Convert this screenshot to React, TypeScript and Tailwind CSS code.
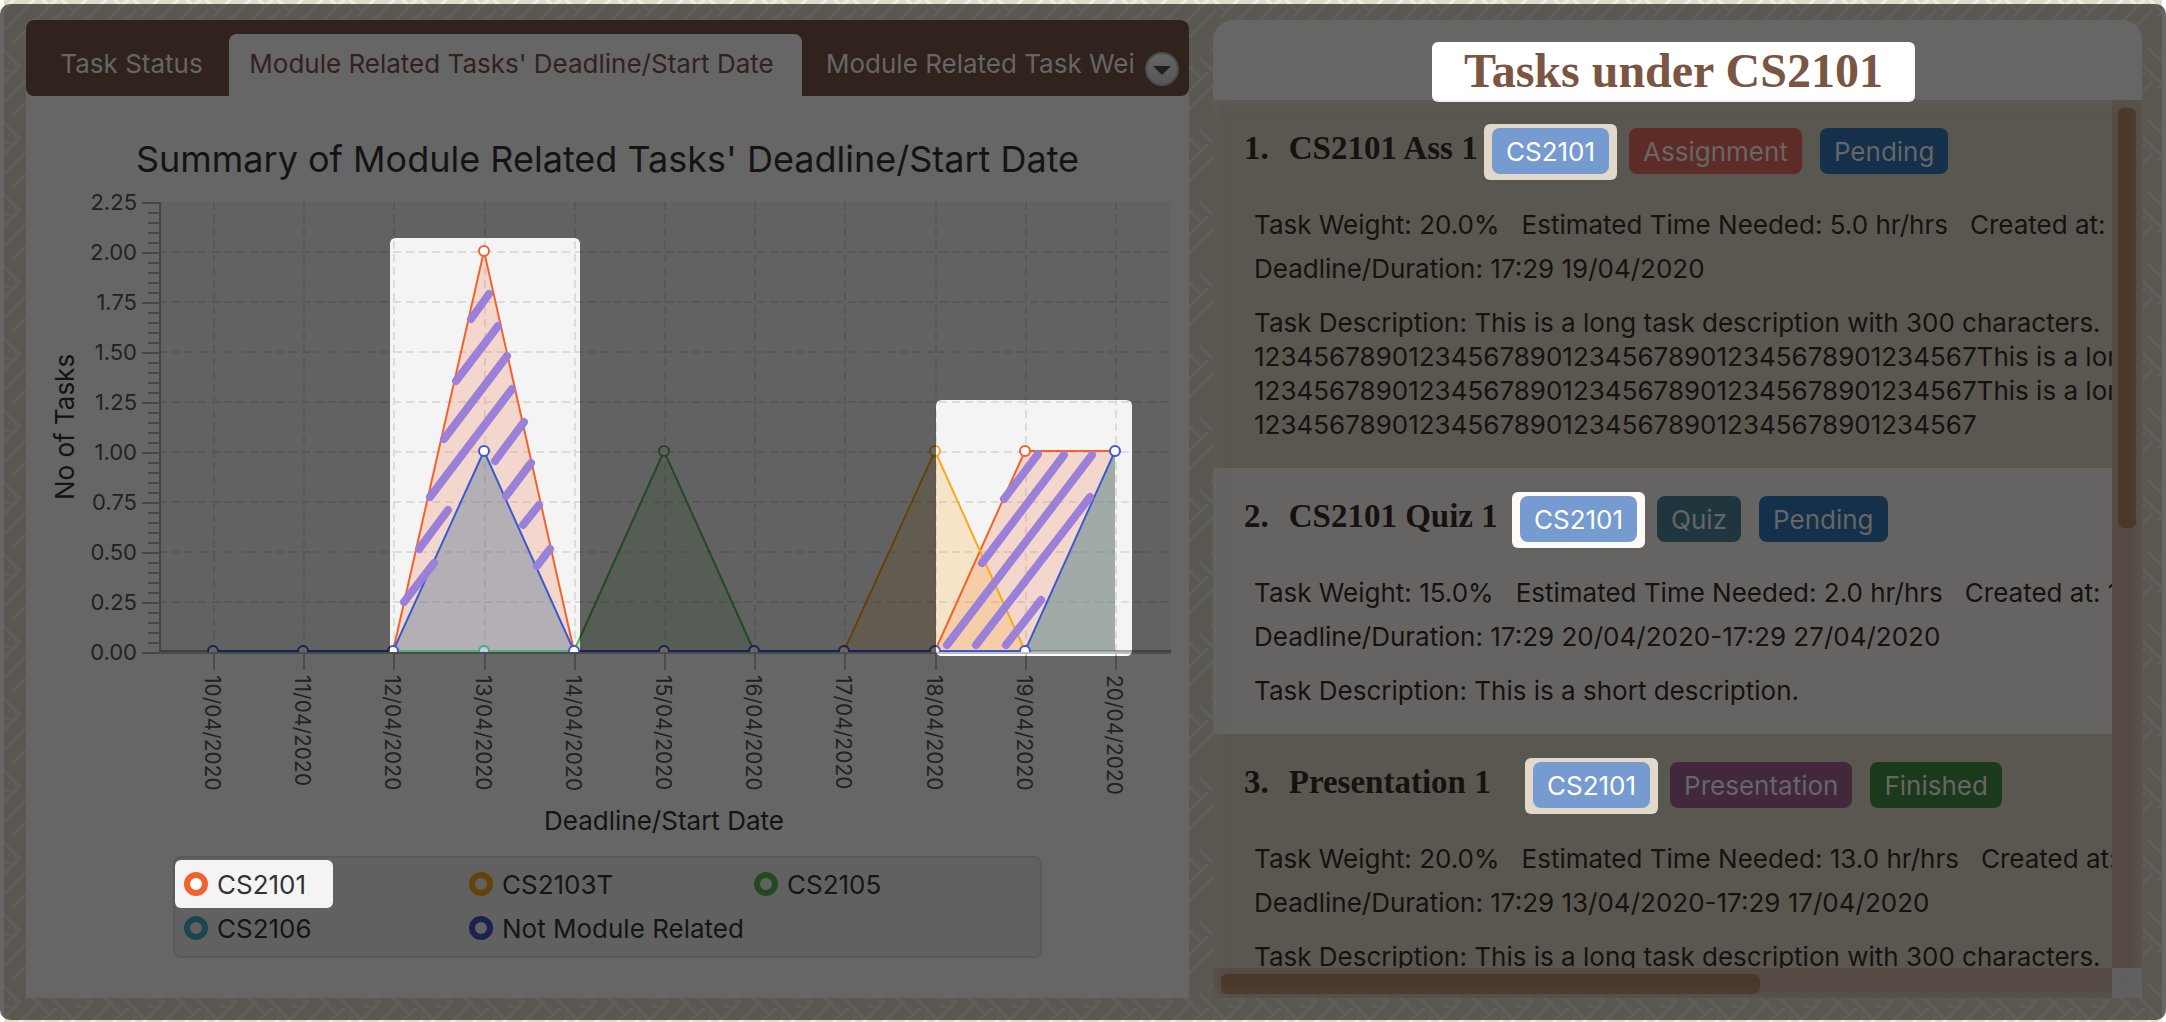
import React from "react";

const COLORS = {
  orange: "#f3622d",
  amber: "#fba71b",
  green: "#57b757",
  teal: "#4ba58c",
  blue: "#4258c9",
  stroke: "#9a80d8",
};

const DATES = [
  "10/04/2020",
  "11/04/2020",
  "12/04/2020",
  "13/04/2020",
  "14/04/2020",
  "15/04/2020",
  "16/04/2020",
  "17/04/2020",
  "18/04/2020",
  "19/04/2020",
  "20/04/2020",
];

const LEGEND = [
  { name: "CS2101", ring: "border-[#f3622d]" },
  { name: "CS2103T", ring: "border-[#64430b]" },
  { name: "CS2105", ring: "border-[#234923]" },
  { name: "CS2106", ring: "border-[#1a4650]" },
  { name: "Not Module Related", ring: "border-[#1a2350]" },
];

type Task = {
  id: number;
  name: string;
  titleWidth: string;
  type: string;
  typeColor: string;
  status: string;
  statusColor: string;
  weight: string;
  time: string;
  created: string;
  deadline: string;
  description: string[];
  row: string;
  spot: string;
};

const LONG = [
  "This is a long task description with 300 characters.",
  "12345678901234567890123456789012345678901234567This is a long task",
  "12345678901234567890123456789012345678901234567This is a long task",
  "12345678901234567890123456789012345678901234567",
];

const TASKS: Task[] = [
  {
    id: 1,
    name: "CS2101 Ass 1",
    titleWidth: "w-[240px]",
    type: "Assignment",
    typeColor: "bg-[#5e2c26]",
    status: "Pending",
    statusColor: "bg-[#14304b]",
    weight: "20.0%",
    time: "5.0",
    created: "17:29 12/04/2020",
    deadline: "17:29 19/04/2020",
    description: LONG,
    row: "bg-[#5a5750]",
    spot: "bg-[#e2d9cb]",
  },
  {
    id: 2,
    name: "CS2101 Quiz 1",
    titleWidth: "w-[268px]",
    type: "Quiz",
    typeColor: "bg-[#1f363f]",
    status: "Pending",
    statusColor: "bg-[#14304b]",
    weight: "15.0%",
    time: "2.0",
    created: "17:29 12/04/2020",
    deadline: "17:29 20/04/2020-17:29 27/04/2020",
    description: ["This is a short description."],
    row: "bg-[#666462]",
    spot: "bg-[#fffaf5]",
  },
  {
    id: 3,
    name: "Presentation 1",
    titleWidth: "w-[281px]",
    type: "Presentation",
    typeColor: "bg-[#42283b]",
    status: "Finished",
    statusColor: "bg-[#1b3a1c]",
    weight: "20.0%",
    time: "13.0",
    created: "17:29 12/04/2020",
    deadline: "17:29 13/04/2020-17:29 17/04/2020",
    description: LONG,
    row: "bg-[#5a5750]",
    spot: "bg-[#e2d9cb]",
  },
];

const X0 = 213;
const STEP = 90.2;
const BASE = 651;
const UNIT = 200;
const px = (i: number) => Math.round(X0 + STEP * i);
const py = (v: number) => BASE - UNIT * v;
const points = (list: number[][]) => list.map(([i, v]) => `${px(i)},${py(v)}`).join(" ");

const HATCH = [
  [471, 319, 489, 294],
  [456, 381, 498, 326],
  [444, 439, 507, 356],
  [430, 497, 512, 389],
  [495, 461, 524, 422],
  [506, 496, 531, 463],
  [523, 525, 539, 505],
  [537, 566, 550, 549],
  [419, 549, 448, 510],
  [404, 602, 434, 563],
  [1004, 499, 1038, 454],
  [982, 563, 1064, 455],
  [947, 645, 1092, 455],
  [976, 645, 1090, 497],
  [1006, 645, 1041, 600],
];

function Dot({ i, v, color, fill = "#fff" }: { i: number; v: number; color: string; fill?: string }) {
  return <circle cx={px(i)} cy={py(v)} r="5" fill={fill} stroke={color} strokeWidth="2" />;
}

function Backdrop() {
  return (
    <>
      <svg className="absolute inset-x-1 inset-y-0 h-full w-[calc(100%-8px)] bg-[#e4dccb]" aria-hidden="true">
        <defs>
          <pattern id="weave" width="72" height="72" patternUnits="userSpaceOnUse">
            <g stroke="#f2eee6" strokeWidth="3" strokeLinecap="round" fill="none">
              <path d="M1 29 L36 -6 M1 101 L36 66 M9 43 L52 0 M30 40 L60 10 M-6 16 L14 -4 M66 16 L86 -4 M-6 88 L14 68" />
              <path d="M-1 50 L16 67 M71 50 L88 67 M29 62 L46 79 M29 -10 L46 7 M44 58 L68 82 M44 -14 L68 10 M56 48 L74 66 M-4 64 L4 72" />
            </g>
          </pattern>
        </defs>
        <rect width="100%" height="100%" fill="url(#weave)" />
      </svg>
      <div className="absolute inset-x-0 top-1 bottom-0.5 rounded-[10px] bg-black/60" />
    </>
  );
}

function TabBar() {
  return (
    <div role="tablist" className="relative flex h-[76px] items-end rounded-lg bg-[#30221d] text-[26px]">
      <button role="tab" aria-selected="false" className="h-[62px] w-[203px] pb-1 pl-2 text-[#666]">
        Task Status
      </button>
      <button role="tab" aria-selected="true" className="h-[62px] w-[573px] rounded-t-lg bg-[#666] pr-2 pb-1 whitespace-nowrap text-[#30221d]">
        Module Related Tasks' Deadline/Start Date
      </button>
      <button role="tab" aria-selected="false" className="h-[62px] flex-1 overflow-hidden pb-1 pl-6 text-left whitespace-nowrap text-[#666]">
        Module Related Task Wei
      </button>
      <button aria-label="More tabs" className="absolute top-8 right-2.5 size-[34px] rounded-full border-2 border-[#4b4b4b] bg-linear-to-b from-[#656565] to-[#575757]">
        <svg viewBox="0 0 30 30" className="size-full" aria-hidden="true">
          <path d="M6 12 H24 L15 21 Z" fill="#1f1f1f" />
        </svg>
      </button>
    </div>
  );
}

function Chart() {
  const ticks = Array.from({ length: 46 }, (_, k) => k);
  return (
    <svg viewBox="26 190 1163 666" className="block h-auto w-full" role="img" aria-label="Number of tasks per deadline or start date">
      <defs>
        <clipPath id="plot">
          <rect x="159" y="202" width="1012" height="450" />
        </clipPath>
      </defs>
      <rect x="26" y="190" width="1163" height="666" fill="#fff" />
      <rect x="159" y="202" width="1012" height="450" fill="#f4f4f4" />
      <g stroke="#dcdcdc" strokeWidth="2" strokeDasharray="8 5">
        {DATES.map((d, i) => (
          <path key={d} d={`M${px(i) + 1} 202 V652`} />
        ))}
        {[1, 2, 3, 4, 5, 6, 7, 8].map((k) => (
          <path key={k} d={`M159 ${202 + k * 50} H1171`} />
        ))}
      </g>
      <path d="M159 651 H1171" stroke="#555" strokeWidth="1" />

      <g clipPath="url(#plot)">
        <g fillOpacity="0.2">
          <polygon points={points([[2, 0], [3, 2], [4, 0]])} fill={COLORS.orange} />
          <polygon points={points([[8, 0], [9, 1], [10, 1], [10, 0]])} fill={COLORS.orange} />
          <polygon points={points([[7, 0], [8, 1], [9, 0]])} fill={COLORS.amber} />
          <polygon points={points([[4, 0], [5, 1], [6, 0]])} fill={COLORS.green} />
        </g>
        <polygon points={points([[2, 0], [3, 1], [4, 0]])} fill="#537292" fillOpacity="0.4" />
        <polygon points={points([[9, 0], [10, 1], [10, 0]])} fill="#4b8084" fillOpacity="0.5" />
        <g fill="none" strokeWidth="2">
          <polyline points={points([[2, 0], [3, 2], [4, 0]])} stroke={COLORS.orange} />
          <polyline points={points([[8, 0], [9, 1], [10, 1]])} stroke={COLORS.orange} />
          <polyline points={points([[7, 0], [8, 1], [9, 0]])} stroke={COLORS.amber} />
          <polyline points={points([[4, 0], [5, 1], [6, 0]])} stroke={COLORS.green} />
          <polyline points={points([[0, 0], [2, 0], [3, 1], [4, 0], [9, 0], [10, 1]])} stroke="#3a5ad0" />
        </g>
        <path d={`M${px(2)} 651 H${px(4)}`} stroke="#4fb07a" strokeWidth="2" />
        <Dot i={3} v={0} color={COLORS.teal} fill="#c0cbe6" />
        {[0, 1, 2, 4, 5, 6, 7, 8, 9].map((i) => (
          <Dot key={i} i={i} v={0} color={COLORS.blue} />
        ))}
      </g>
      <Dot i={5} v={1} color={COLORS.green} fill="#e8f2e8" />
      <Dot i={8} v={1} color={COLORS.amber} />
      <Dot i={3} v={2} color={COLORS.orange} />
      <Dot i={3} v={1} color={COLORS.blue} />
      <Dot i={9} v={1} color={COLORS.orange} />
      <Dot i={10} v={1} color={COLORS.blue} />

      <g stroke="#bfbfbf" strokeWidth="2" fill="none">
        <path d="M160 202 V652" stroke="#b0b0b0" />
        <path d="M159 653 H1171" />
        {ticks.map((k) => (
          <path key={k} d={`M${k % 5 === 0 ? 142 : 148} ${203 + k * 10} H159`} stroke="#b0b0b0" />
        ))}
        {DATES.map((d, i) => (
          <path key={d} d={`M${px(i) + 1} 653 V670`} />
        ))}
      </g>

      <g fontSize="22" fill="#555" textAnchor="end">
        {["2.25", "2.00", "1.75", "1.50", "1.25", "1.00", "0.75", "0.50", "0.25", "0.00"].map((t, k) => (
          <text key={t} x="137" y={210 + k * 50}>
            {t}
          </text>
        ))}
      </g>
      <g fontSize="21" fill="#555">
        {DATES.map((d, i) => (
          <text key={d} transform={`translate(${px(i) - 8} 675) rotate(90)`}>
            {d}
          </text>
        ))}
      </g>
      <g fontSize="26" fill="#333" textAnchor="middle">
        <text transform="translate(74 427) rotate(-90)">No of Tasks</text>
        <text x="664" y="830">
          Deadline/Start Date
        </text>
      </g>

      <path
        fill="#000"
        fillOpacity="0.6"
        fillRule="evenodd"
        d="M26 190 H1189 V856 H26 Z M390 652 V244 Q390 238 396 238 H574 Q580 238 580 244 V652 Z M936 406 Q936 400 942 400 H1126 Q1132 400 1132 406 V650 Q1132 656 1126 656 H942 Q936 656 936 650 Z"
      />
      <g stroke={COLORS.stroke} strokeWidth="8" strokeLinecap="round">
        {HATCH.map(([x1, y1, x2, y2]) => (
          <path key={`${x1}-${y1}`} d={`M${x1} ${y1} L${x2} ${y2}`} />
        ))}
      </g>
    </svg>
  );
}

function Legend() {
  return (
    <ul className="mx-[147px] grid h-[102px] grid-cols-[285px_285px_1fr] grid-rows-[44px_44px] rounded-lg border-2 border-[#5a5a5a] bg-[#616161] pt-1 text-[26px] text-[#151515]">
      {LEGEND.map((item, i) => (
        <li key={item.name} className="flex items-center">
          <span
            className={
              i === 0
                ? "-my-0.5 flex h-12 w-[158px] items-center gap-[9px] rounded-md bg-[#f4f4f4] pl-[9px] text-[#333]"
                : "flex items-center gap-[9px] pl-[9px] whitespace-nowrap"
            }
          >
            <span className={`size-6 rounded-full border-[6px] ${item.ring} ${i === 0 ? "bg-white" : ""}`} />
            {item.name}
          </span>
        </li>
      ))}
    </ul>
  );
}

function TaskCard({ task }: { task: Task }) {
  return (
    <li className={`pt-7 pb-[26px] pl-[31px] whitespace-nowrap ${task.row}`}>
      <div className="flex h-[46px] items-center text-[26px] text-[#666]">
        <h2 className={`flex shrink-0 gap-5 pb-1 font-['Liberation_Serif',serif] text-[33px] font-bold text-[#17110f] ${task.titleWidth}`}>
          <span>{task.id}.</span>
          <span>{task.name}</span>
        </h2>
        <span className={`-mb-0.5 rounded-md px-2 pt-1 pb-1.5 ${task.spot}`}>
          <span className="flex h-[46px] items-center rounded-lg bg-[#759bd0] px-3.5 text-white">CS2101</span>
        </span>
        <span className={`ml-3 flex h-[46px] items-center rounded-lg px-3.5 ${task.typeColor}`}>{task.type}</span>
        <span className={`ml-[18px] flex h-[46px] items-center rounded-lg px-3.5 ${task.statusColor}`}>{task.status}</span>
      </div>
      <div className="mt-[29px] pl-2.5 text-[26px] leading-[44px] text-[#17110f]">
        <p className="flex gap-[22px]">
          <span>Task Weight: {task.weight}</span>
          <span>Estimated Time Needed: {task.time} hr/hrs</span>
          <span>Created at: {task.created}</span>
        </p>
        <p>Deadline/Duration: {task.deadline}</p>
        <p className="mt-[15px] leading-[34px]">
          Task Description:{" "}
          {task.description.map((line, i) => (
            <React.Fragment key={i}>
              {i > 0 && <br />}
              {line}
            </React.Fragment>
          ))}
        </p>
      </div>
    </li>
  );
}

export default function App() {
  return (
    <div className="relative h-screen overflow-hidden bg-white font-[Inter,sans-serif]">
      <Backdrop />
      <main className="relative grid h-full grid-cols-[1163fr_929fr] gap-6 pt-5 pr-6 pb-6 pl-[26px]">
        <section className="min-w-0 overflow-hidden rounded-t-lg bg-[#666]">
          <TabBar />
          <h2 className="flex h-[94px] items-center justify-center pt-8 text-[36px] whitespace-nowrap text-[#141414]">
            Summary of Module Related Tasks' Deadline/Start Date
          </h2>
          <Chart />
          <Legend />
        </section>

        <section className="relative flex min-w-0 flex-col overflow-hidden rounded-t-[20px] bg-[#666]">
          <header className="relative z-10 flex h-20 items-start justify-center pt-[22px] pr-2">
            <h1 className="flex h-[60px] items-center rounded-md border-b-2 border-[#f3efe8] bg-white px-8 font-['Liberation_Serif',serif] text-[48px] font-bold whitespace-nowrap text-[#795542]">
              Tasks under CS2101
            </h1>
          </header>
          <div className="grid min-h-0 flex-1 grid-cols-[1fr_30px] grid-rows-[1fr_30px]">
            <ul className="min-h-0 min-w-0 overflow-hidden">
              {TASKS.map((t) => (
                <TaskCard key={t.id} task={t} />
              ))}
            </ul>
            <div className="bg-[#564c45] px-1.5 pt-2">
              <div className="h-[420px] rounded-md bg-[#4a382a]" />
            </div>
            <div className="bg-[#564c45] px-2 pt-1.5">
              <div className="h-5 w-[61%] rounded-md bg-[#4a382a]" />
            </div>
            <div className="bg-[#606060]" />
          </div>
          <div className="pointer-events-none absolute inset-x-0 top-20 bottom-0 shadow-[inset_0_0_16px_rgba(102,102,102,0.5)]" />
        </section>
      </main>
    </div>
  );
}
